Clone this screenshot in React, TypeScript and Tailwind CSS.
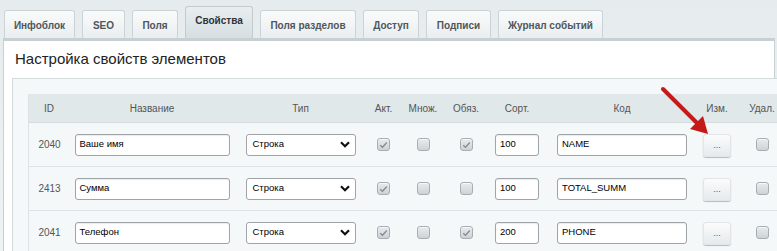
import React from "react";

const tabs = [
  { label: "Инфоблок", w: "w-[71px]" },
  { label: "SEO", w: "w-[43px]" },
  { label: "Поля", w: "w-[46px]" },
  { label: "Свойства", w: "w-[68px]", active: true },
  { label: "Поля разделов", w: "w-[96px]" },
  { label: "Доступ", w: "w-[56px]" },
  { label: "Подписи", w: "w-[65px]" },
  { label: "Журнал событий", w: "w-[105px]" },
];

const rows = [
  { id: "2040", name: "Ваше имя", act: true, mult: false, req: true, sort: "100", code: "NAME" },
  { id: "2413", name: "Сумма", act: true, mult: false, req: false, sort: "100", code: "TOTAL_SUMM" },
  { id: "2041", name: "Телефон", act: true, mult: false, req: true, sort: "200", code: "PHONE" },
];

const cols = "grid grid-cols-[40px_166px_131px_35px_44px_42px_60px_150px_40px_48px]";

function Check({ checked }: { checked: boolean }) {
  return (
    <div className="w-[13px] h-[13px] rounded-[3px] border border-[#a7aeb1] bg-gradient-to-b from-[#e8ebed] to-[#cdd3d5] shadow-[inset_0_1px_0_#f6f8f8] flex items-center justify-center">
      {checked && (
        <svg width="9" height="8" viewBox="0 0 9 8">
          <path d="M1.2 4.2 L3.5 6.3 L7.8 1.5" fill="none" stroke="#858c8f" strokeWidth="1.3" />
        </svg>
      )}
    </div>
  );
}

function TextBox({ value, w }: { value: string; w: string }) {
  return (
    <div className={`${w} h-[22px] rounded-[3px] border border-[#9ea4a7] bg-white shadow-[inset_0_1px_1px_rgba(0,0,0,0.08)] flex items-center pl-[4px] text-[9.5px] text-black`}>
      {value}
    </div>
  );
}

function Select() {
  return (
    <div className="w-[110px] h-[22px] rounded-[3px] border border-[#9ea4a7] bg-white flex items-center justify-between pl-[6px] pr-[5px] text-[9.5px] text-black">
      <span>Строка</span>
      <svg width="10" height="7" viewBox="0 0 10 7">
        <path d="M1 1.2 L5 5.2 L9 1.2" fill="none" stroke="#111" strokeWidth="2.2" />
      </svg>
    </div>
  );
}

export default function App() {
  return (
    <div className="relative w-[777px] h-[251px] overflow-hidden bg-gradient-to-b from-[#e6ebed] to-[#eef2f3] font-['Liberation_Sans',Arial,sans-serif]">
      {/* Tabs */}
      <div className="flex items-end gap-[7px] pl-[4px] h-[38px]">
        {tabs.map((t) =>
          t.active ? (
            <div
              key={t.label}
              className={`${t.w} h-[32px] rounded-t-[3px] border border-b-0 border-[#c3cbce] bg-gradient-to-b from-[#e9eef0] to-[#d7dfe2] flex items-center justify-center pb-[4px] text-[10px] font-bold text-[#2d3436]`}
            >
              {t.label}
            </div>
          ) : (
            <div
              key={t.label}
              className={`${t.w} h-[28px] rounded-t-[3px] border border-b-0 border-[#ccd3d6] bg-gradient-to-b from-[#fafbfb] to-[#eaeef0] flex items-center justify-center pt-[2px] text-[10px] font-bold text-[#4f575a]`}
            >
              {t.label}
            </div>
          )
        )}
      </div>
      {/* Panel */}
      <div className="ml-[3px] w-[772px] h-[213px] border-t-[3px] border-[#c8d0d3] border-l border-r bg-white">
        <div className="h-[37px] pl-[11px] flex items-center text-[15px] text-[#222]">
          Настройка свойств элементов
        </div>
        <div className="ml-[8px] w-[800px] h-[200px] border-t border-l border-[#d3dadc] bg-[#f5f8f9] pl-[15px] pt-[15px]">
          <div className="border-l border-[#dde3e5]">
            <div className={`${cols} h-[29px] bg-[#e1e8ea] border-b border-[#d5dcde] text-[10px] text-[#555] items-center text-center`}>
              <div>ID</div>
              <div>Название</div>
              <div>Тип</div>
              <div>Акт.</div>
              <div>Множ.</div>
              <div>Обяз.</div>
              <div>Сорт.</div>
              <div>Код</div>
              <div>Изм.</div>
              <div className="pl-[2px]">Удал.</div>
            </div>
            {rows.map((r) => (
              <div key={r.id} className={`${cols} h-[44px] border-b border-[#dde3e4] items-center text-[10px] text-[#555]`}>
                <div className="text-center pl-[1px]">{r.id}</div>
                <div className="flex justify-center">
                  <TextBox value={r.name} w="w-[155px]" />
                </div>
                <div className="flex justify-center">
                  <Select />
                </div>
                <div className="flex justify-center">
                  <Check checked={r.act} />
                </div>
                <div className="flex justify-center">
                  <Check checked={r.mult} />
                </div>
                <div className="flex justify-center">
                  <Check checked={r.req} />
                </div>
                <div className="flex justify-center">
                  <TextBox value={r.sort} w="w-[44px]" />
                </div>
                <div className="flex justify-center">
                  <TextBox value={r.code} w="w-[130px]" />
                </div>
                <div className="flex justify-center">
                  <div className="w-[28px] h-[23px] mt-[2px] rounded-[3px] bg-gradient-to-b from-[#fbfcfc] to-[#e5eaec] shadow-[0_1px_1px_rgba(0,0,0,0.25)] border border-[#e0e5e7] flex items-center justify-center text-[9px] text-[#555] leading-none">
                    ...
                  </div>
                </div>
                <div className="flex justify-center pl-[2px]">
                  <Check checked={false} />
                </div>
              </div>
            ))}
          </div>
        </div>
      </div>
      {/* Red arrow */}
      <svg className="absolute left-[655px] top-[84px]" width="60" height="56" viewBox="0 0 60 56">
        <path d="M8 5 L43 40" stroke="#c41a1a" strokeWidth="4" strokeLinecap="round" />
        <path d="M53 50 L35 45 L48 32 Z" fill="#c41a1a" />
      </svg>
    </div>
  );
}
